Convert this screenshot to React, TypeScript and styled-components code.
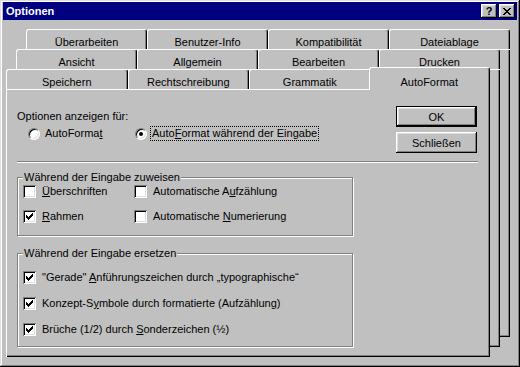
import React from 'react';
import styled, { createGlobalStyle } from 'styled-components';

const GlobalStyle = createGlobalStyle`
  html, body {
    margin: 0;
    padding: 0;
    background: #c0c0c0;
  }
  body {
    font-family: "Liberation Sans", Arial, sans-serif;
    font-size: 11px;
    color: #000;
  }
`;

const raised = `
  box-shadow: inset -1px -1px #000, inset 1px 1px #fff, inset -2px -2px #808080, inset 2px 2px #dfdfdf;
`;

const Window = styled.div`
  width: 520px;
  height: 367px;
  box-sizing: border-box;
  padding: 2px 3px 3px;
  background: #c0c0c0;
  box-shadow: inset -1px -1px #000, inset 1px 1px #dfdfdf, inset -2px -2px #808080, inset 2px 2px #fff;
  display: flex;
  flex-direction: column;
`;

const TitleBar = styled.div`
  height: 18px;
  flex-shrink: 0;
  background: #000080;
  color: #fff;
  display: flex;
  align-items: center;
  padding: 0 2px 0 3px;
`;

const Title = styled.div`
  flex: 1;
  font-weight: bold;
  line-height: 13px;
  padding-top: 1px;
`;

const CaptionButtons = styled.div`
  display: flex;
  gap: 2px;
`;

const CaptionButton = styled.button`
  width: 16px;
  height: 14px;
  padding: 0;
  border: 0;
  background: #c0c0c0;
  ${raised}
  display: flex;
  align-items: center;
  justify-content: center;
  font-family: "Liberation Sans", Arial, sans-serif;
  font-size: 11px;
  font-weight: bold;
  line-height: 11px;
  color: #000;
`;

const Sheets = styled.div`
  display: grid;
  width: 504px;
  height: 328px;
  margin: 9px 0 0 3px;
`;

const Sheet = styled.div<{ $depth: number }>`
  grid-area: 1 / 1;
  width: 484px;
  margin-left: ${({ $depth }) => $depth * 10}px;
  margin-top: ${({ $depth }) => (2 - $depth) * 20}px;
  margin-bottom: ${({ $depth }) => $depth * 10}px;
  display: flex;
  flex-direction: column;
  z-index: ${({ $depth }) => 3 - $depth};
`;

const TabRow = styled.div`
  display: flex;
  align-items: flex-end;
  height: 20px;
  flex-shrink: 0;
`;

const Tab = styled.div<{ $active?: boolean }>`
  flex: 1 1 0;
  min-width: 0;
  box-sizing: border-box;
  height: ${({ $active }) => ($active ? 23 : 20)}px;
  margin: ${({ $active }) => ($active ? '0 0 -1px -2px' : '0')};
  padding-bottom: ${({ $active }) => ($active ? 1 : 0)}px;
  z-index: ${({ $active }) => ($active ? 1 : 0)};
  background: #c0c0c0;
  border-top: 1px solid #fff;
  border-left: 1px solid #fff;
  border-right: 1px solid #000;
  border-radius: 3px 3px 0 0;
  box-shadow: inset -1px 0 #808080;
  display: flex;
  align-items: flex-end;
  justify-content: center;
  line-height: 13px;
  white-space: nowrap;
`;

const Panel = styled.div`
  flex: 1;
  background: #c0c0c0;
  box-shadow: inset 1px 1px #fff, inset -1px -1px #000, inset -2px -2px #808080;
`;

const PageBody = styled(Panel)`
  display: flex;
  flex-direction: column;
  padding: 17px 12px 0 11px;
`;

const TopSection = styled.div`
  display: flex;
  justify-content: space-between;
  height: 47px;
`;

const ShowFor = styled.div`
  display: flex;
  flex-direction: column;
  padding-top: 4px;
`;

const Caption = styled.div`
  line-height: 13px;
`;

const RadioRow = styled.div`
  display: grid;
  grid-template-columns: 107px auto;
  align-items: center;
  height: 15px;
  margin: 3px 0 0 11px;
`;

const Choice = styled.label`
  display: flex;
  align-items: center;
  gap: 3px;
  white-space: nowrap;
`;

const RadioCircle = styled.span<{ $on?: boolean }>`
  width: 12px;
  height: 12px;
  box-sizing: border-box;
  border-radius: 50%;
  background: #fff;
  border: 1px solid;
  border-color: #808080 #fff #fff #808080;
  box-shadow: inset 1px 1px #000, inset -1px -1px #dfdfdf;
  display: flex;
  align-items: center;
  justify-content: center;

  &::after {
    content: '';
    width: 4px;
    height: 4px;
    border-radius: 50%;
    background: ${({ $on }) => ($on ? '#000' : 'transparent')};
  }
`;

const ChoiceText = styled.span<{ $focus?: boolean }>`
  border: 1px dotted ${({ $focus }) => ($focus ? '#000' : 'transparent')};
  padding: 0 1px;
  line-height: 13px;
`;

const ButtonStack = styled.div`
  display: flex;
  flex-direction: column;
  gap: 5px;
  margin-right: 1px;
`;

const PushButton = styled.button<{ $default?: boolean }>`
  width: 81px;
  height: 21px;
  box-sizing: border-box;
  padding: 0;
  background: #c0c0c0;
  border: ${({ $default }) => ($default ? '1px solid #000' : '0')};
  ${raised}
  font-family: "Liberation Sans", Arial, sans-serif;
  font-size: 11px;
  color: #000;
`;

const Separator = styled.hr`
  margin: 8px 0 0;
  height: 0;
  border: 0;
  border-top: 1px solid #808080;
  border-bottom: 1px solid #fff;
`;

const Group = styled.fieldset<{ $gap: number; $padTop: number; $padBottom: number }>`
  margin: ${({ $gap }) => $gap}px 0 0;
  width: 336px;
  min-width: 0;
  box-sizing: border-box;
  border: 1px solid #808080;
  box-shadow: 1px 1px #fff, inset 1px 1px #fff;
  padding: ${({ $padTop }) => $padTop}px 0 ${({ $padBottom }) => $padBottom}px 5px;
`;

const Legend = styled.legend`
  padding: 0 1px;
  line-height: 13px;
  background: #c0c0c0;
`;

const CheckGrid = styled.div<{ $columns: string; $rowGap: number }>`
  display: grid;
  grid-template-columns: ${({ $columns }) => $columns};
  row-gap: ${({ $rowGap }) => $rowGap}px;
`;

const CheckItem = styled.label`
  display: flex;
  align-items: center;
  gap: 6px;
  height: 13px;
  line-height: 13px;
  white-space: nowrap;
`;

const Box = styled.span`
  width: 13px;
  height: 13px;
  flex-shrink: 0;
  box-sizing: border-box;
  background: #fff;
  box-shadow: inset 1px 1px #808080, inset -1px -1px #fff, inset 2px 2px #000, inset -2px -2px #dfdfdf;
  display: flex;
  align-items: center;
  justify-content: center;
`;

const Key = styled.span`
  text-decoration: underline;
  text-underline-offset: 1px;
`;

const Check = () => (
  <svg width="7" height="7" viewBox="0 0 7 7">
    <path d="M0 2h1v1h1v1h1v-1h1v-1h1v-1h1v-1h1v3h-1v1h-1v1h-1v1h-1v1h-1v-1h-1v-1h-1z" fill="#000" />
  </svg>
);

const CheckBox = ({ checked }: { checked?: boolean }) => <Box>{checked && <Check />}</Box>;

const CloseGlyph = () => (
  <svg width="8" height="7" viewBox="0 0 8 7" shapeRendering="crispEdges">
    <path
      d="M0 0h2v1h1v1h2v-1h1v-1h2v1h-1v1h-1v1h-1v1h1v1h1v1h1v1h-2v-1h-1v-1h-2v1h-1v1h-2v-1h1v-1h1v-1h1v-1h-1v-1h-1v-1h-1z"
      fill="#000"
    />
  </svg>
);

const backTabs = ['Überarbeiten', 'Benutzer-Info', 'Kompatibilität', 'Dateiablage'];
const middleTabs = ['Ansicht', 'Allgemein', 'Bearbeiten', 'Drucken'];
const frontTabs = ['Speichern', 'Rechtschreibung', 'Grammatik', 'AutoFormat'];

export default function App() {
  return (
    <>
      <GlobalStyle />
      <Window>
        <TitleBar>
          <Title>Optionen</Title>
          <CaptionButtons>
            <CaptionButton>?</CaptionButton>
            <CaptionButton>
              <CloseGlyph />
            </CaptionButton>
          </CaptionButtons>
        </TitleBar>

        <Sheets>
          <Sheet $depth={2}>
            <TabRow>
              {backTabs.map((t) => (
                <Tab key={t}>{t}</Tab>
              ))}
            </TabRow>
            <Panel />
          </Sheet>

          <Sheet $depth={1}>
            <TabRow>
              {middleTabs.map((t) => (
                <Tab key={t}>{t}</Tab>
              ))}
            </TabRow>
            <Panel />
          </Sheet>

          <Sheet $depth={0}>
            <TabRow>
              {frontTabs.map((t) => (
                <Tab key={t} $active={t === 'AutoFormat'}>
                  {t}
                </Tab>
              ))}
            </TabRow>
            <PageBody>
              <TopSection>
                <ShowFor>
                  <Caption>Optionen anzeigen für:</Caption>
                  <RadioRow>
                    <Choice>
                      <RadioCircle />
                      <ChoiceText>
                        AutoForma<Key>t</Key>
                      </ChoiceText>
                    </Choice>
                    <Choice>
                      <RadioCircle $on />
                      <ChoiceText $focus>
                        Auto<Key>F</Key>ormat während der Eingabe
                      </ChoiceText>
                    </Choice>
                  </RadioRow>
                </ShowFor>
                <ButtonStack>
                  <PushButton $default>OK</PushButton>
                  <PushButton>Schließen</PushButton>
                </ButtonStack>
              </TopSection>

              <Separator />

              <Group $gap={8} $padTop={1} $padBottom={12}>
                <Legend>Während der Eingabe zuweisen</Legend>
                <CheckGrid $columns="111px auto" $rowGap={12}>
                  <CheckItem>
                    <CheckBox />
                    <span>
                      <Key>Ü</Key>berschriften
                    </span>
                  </CheckItem>
                  <CheckItem>
                    <CheckBox />
                    <span>
                      Automatische A<Key>u</Key>fzählung
                    </span>
                  </CheckItem>
                  <CheckItem>
                    <CheckBox checked />
                    <span>
                      <Key>R</Key>ahmen
                    </span>
                  </CheckItem>
                  <CheckItem>
                    <CheckBox />
                    <span>
                      Automatische <Key>N</Key>umerierung
                    </span>
                  </CheckItem>
                </CheckGrid>
              </Group>

              <Group $gap={11} $padTop={11} $padBottom={10}>
                <Legend>Während der Eingabe ersetzen</Legend>
                <CheckGrid $columns="auto" $rowGap={13}>
                  <CheckItem>
                    <CheckBox checked />
                    <span>
                      "Gerade" <Key>A</Key>nführungszeichen durch „typographische“
                    </span>
                  </CheckItem>
                  <CheckItem>
                    <CheckBox checked />
                    <span>
                      Konzept-S<Key>y</Key>mbole durch formatierte (Aufzählung)
                    </span>
                  </CheckItem>
                  <CheckItem>
                    <CheckBox checked />
                    <span>
                      Brüche (1/2) durch <Key>S</Key>onderzeichen (½)
                    </span>
                  </CheckItem>
                </CheckGrid>
              </Group>
            </PageBody>
          </Sheet>
        </Sheets>
      </Window>
    </>
  );
}
